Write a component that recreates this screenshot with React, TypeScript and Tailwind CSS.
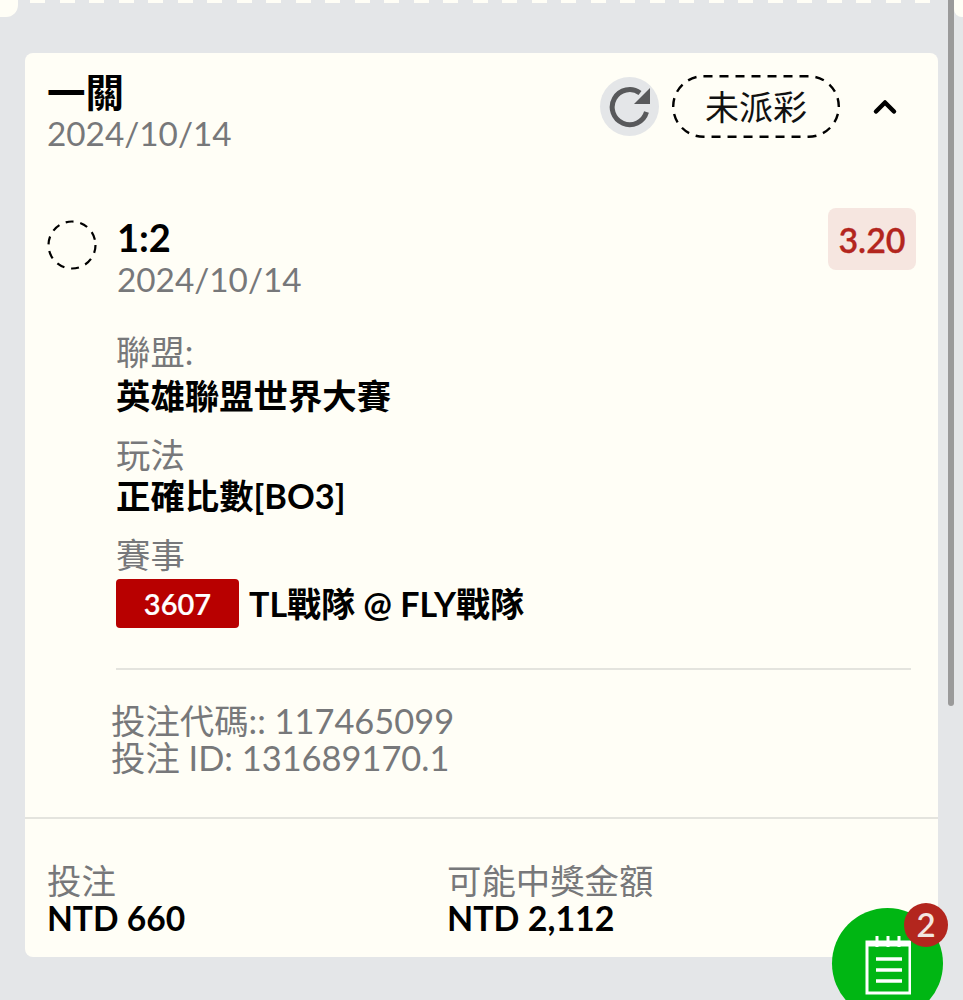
import { ChevronUp } from "lucide-react";

const font = { fontFamily: '"Lato", "Noto Sans CJK TC", sans-serif' };

function Field({ label, labelHeight, children }: { label: string; labelHeight: string; children: React.ReactNode }) {
  return (
    <div className="mb-[18px]">
      <p className={`${labelHeight} text-[34.4px] leading-[40px] text-[#77787a]`}>{label}</p>
      <div className="text-[34.4px] leading-[42px] font-bold text-black">{children}</div>
    </div>
  );
}

export default function App() {
  return (
    <div
      style={font}
      className="relative h-[1000px] w-[963px] overflow-hidden bg-[#e4e6e8] px-[25px] pt-[53px]"
    >
      <div className="absolute top-0 left-0 h-[17px] w-[18px] rounded-br-[12px] bg-[#fffef6]" />
      <div className="absolute top-0 left-[30px] flex w-[910px] gap-[14.5px]">
        {Array.from({ length: 31 }).map((_, i) => (
          <span key={i} className="h-[3px] w-[15px] shrink-0 bg-[#fffef6]" />
        ))}
      </div>
      <div className="absolute top-0 left-[954px] h-[17px] w-[9px] rounded-bl-[8px] bg-[#fffef6]" />
      <div className="absolute top-0 left-[948px] h-[706px] w-[6px] rounded-b-full bg-[#9a9a9a]" />

      <main className="h-[904px] w-[913px] rounded-[8px] bg-[#fffef6]">
        <header className="flex items-start justify-between pt-[19px] pr-[35px] pl-[22px]">
          <div>
            <h1 className="text-[38.5px] leading-[40px] font-bold text-black">一關</h1>
            <p className="mt-[2px] text-[33.3px] leading-[38px] text-[#77787a]">2024/10/14</p>
          </div>
          <div className="mt-[3px] flex items-center">
            <button className="flex h-[59px] w-[59px] items-center justify-center rounded-full bg-[#e4e6e8]">
              <svg width="44" height="44" viewBox="0 0 44 44" fill="none">
                <path d="M38.5 27A17.5 17.5 0 1 1 32 8" stroke="#58595b" strokeWidth="5" />
                <path d="M42 3v16H26z" fill="#58595b" />
              </svg>
            </button>
            <span className="relative ml-[13px] flex h-[63px] w-[168px] items-center justify-center text-[34px] text-[#111]">
              <svg className="absolute inset-0" width="168" height="63" fill="none">
                <rect x="1.2" y="1.2" width="165.6" height="60.6" rx="30.3" stroke="black" strokeWidth="2.4" strokeDasharray="9 7" />
              </svg>
              未派彩
            </span>
            <ChevronUp size={36} strokeWidth={3} className="ml-[27px] text-black" />
          </div>
        </header>

        <section className="mt-[56px] flex items-start justify-between pr-[22px] pl-[22px]">
          <div className="flex items-start">
            <svg className="mt-[12px]" width="50" height="50" fill="none">
              <circle cx="25" cy="25" r="23.5" stroke="black" strokeWidth="2.2" strokeDasharray="8 6.8" />
            </svg>
            <div className="ml-[20px]">
              <p className="mt-[7px] text-[38px] leading-[44px] font-bold text-black">1:2</p>
              <p className="mt-[1px] text-[33.3px] leading-[38px] text-[#77787a]">2024/10/14</p>
            </div>
          </div>
          <span className="flex h-[62px] w-[88px] items-center justify-center rounded-[8px] bg-[#f6e6e0] text-[34px] font-semibold text-[#b3261e] [-webkit-text-stroke:0.3px_#b3261e]">
            3.20
          </span>
        </section>

        <section className="mt-[-2px] pr-[27px] pl-[91px]">
          <div className="pt-[36px]">
            <Field label="聯盟:" labelHeight="h-[43px]">英雄聯盟世界大賽</Field>
            <Field label="玩法" labelHeight="h-[40px]">正確比數[BO3]</Field>
            <div>
              <p className="h-[40px] text-[34.4px] leading-[40px] text-[#77787a]">賽事</p>
              <div className="mt-[4px] flex h-[49px] items-center text-[34px] leading-[49px] font-bold text-black">
                <span className="flex h-[49px] w-[123px] items-center justify-center rounded-[4px] bg-[#b80000] text-[29px] font-semibold text-white [-webkit-text-stroke:0.2px_white]">
                  3607
                </span>
                <span className="ml-[10px]">TL戰隊 @ FLY戰隊</span>
              </div>
            </div>
          </div>
          <div className="mt-[40px] h-[2px] bg-[#e4e4de]" />
          <div className="mt-[32px] ml-[-5px] text-[34.4px] leading-[37px] text-[#77787a]">
            <p>投注代碼:: 117465099</p>
            <p>投注 ID: 131689170.1</p>
          </div>
        </section>

        <div className="mt-[41px] h-[2px] bg-[#e4e4de]" />

        <footer className="flex pt-[43px] pl-[22px]">
          <div className="w-[400px]">
            <p className="text-[34.4px] leading-[38px] text-[#77787a]">投注</p>
            <p className="text-[33.6px] leading-[36px] font-bold text-black">NTD 660</p>
          </div>
          <div>
            <p className="text-[34.4px] leading-[38px] text-[#77787a]">可能中獎金額</p>
            <p className="text-[34px] leading-[36px] font-bold text-black">NTD 2,112</p>
          </div>
        </footer>
      </main>

      <button className="absolute top-[908px] left-[832px] flex h-[111px] w-[111px] justify-center rounded-full bg-[#00b613] pt-[27px]">
        <svg width="46" height="60" viewBox="0 0 46 60" fill="none" stroke="white" strokeWidth="3">
          <rect x="2" y="7" width="43" height="51" />
          <path d="M2 9h43" strokeWidth="5" />
          <path d="M12 1v11M23 1v11M34 1v11" />
          <path d="M11 24h26M11 35h26M11 46h26" strokeWidth="3.4" />
        </svg>
      </button>
      <span className="absolute top-[903px] left-[904px] flex h-[44px] w-[44px] items-center justify-center rounded-full bg-[#b3261e] text-[33px] font-semibold text-[#f3e6e0]">
        2
      </span>
    </div>
  );
}
